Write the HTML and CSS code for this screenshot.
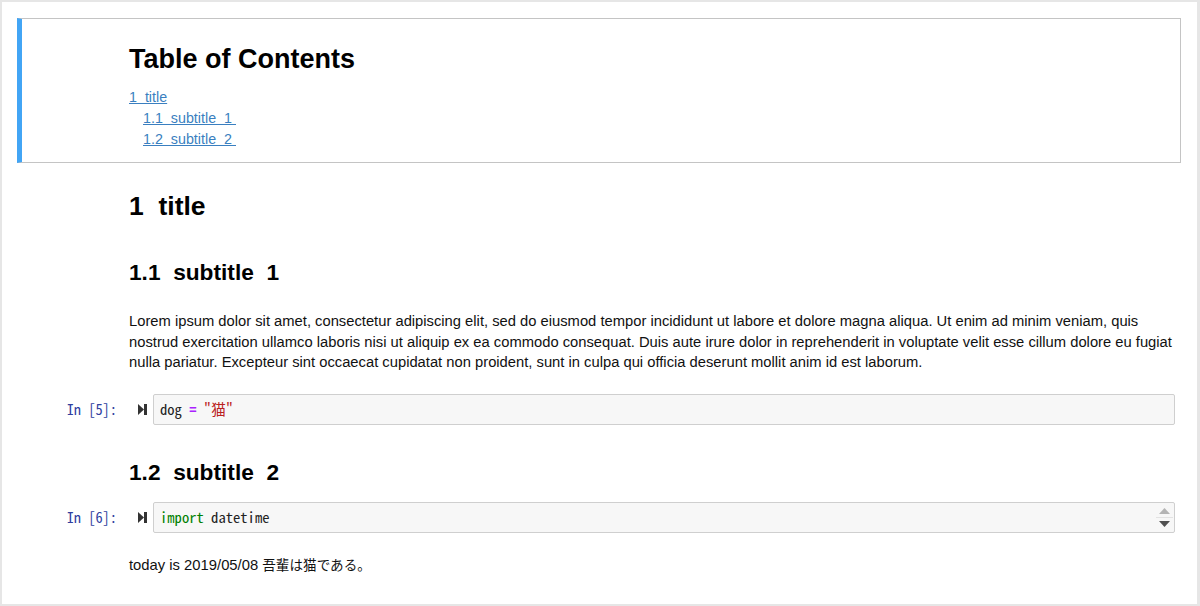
FILE: index.html
```html
<!DOCTYPE html>
<html lang="ja">
<head>
<meta charset="utf-8">
<title>Notebook</title>
<link rel="stylesheet" href="styles.css">
</head>
<body>
<div class="page">
  <div class="notebook">
    <div class="toc-cell">
      <div class="toc-title">Table of Contents</div>
      <ul class="toc-list">
        <li><a href="#t1">1&nbsp;&nbsp;title</a>
          <ul class="toc-sub">
            <li><a href="#t11">1.1&nbsp;&nbsp;subtitle&nbsp;&nbsp;1&nbsp;</a></li>
            <li><a href="#t12">1.2&nbsp;&nbsp;subtitle&nbsp;&nbsp;2&nbsp;</a></li>
          </ul>
        </li>
      </ul>
    </div>

    <div class="cell md h1-cell">
      <div class="prompt"></div>
      <div class="md-body"><h1 class="h1" id="t1">1&nbsp;&nbsp;title</h1></div>
    </div>

    <div class="cell md h2-cell first-h2">
      <div class="prompt"></div>
      <div class="md-body"><h2 class="h2" id="t11">1.1&nbsp;&nbsp;subtitle&nbsp;&nbsp;1</h2></div>
    </div>

    <div class="cell md para-cell">
      <div class="prompt"></div>
      <div class="md-body wide"><p class="para">Lorem ipsum dolor sit amet, consectetur adipiscing elit, sed do eiusmod tempor incididunt ut labore et dolore magna aliqua. Ut enim ad minim veniam, quis nostrud exercitation ullamco laboris nisi ut aliquip ex ea commodo consequat. Duis aute irure dolor in reprehenderit in voluptate velit esse cillum dolore eu fugiat nulla pariatur. Excepteur sint occaecat cupidatat non proident, sunt in culpa qui officia deserunt mollit anim id est laborum.</p></div>
    </div>

    <div class="cell code-cell cell-5">
      <div class="prompt in-prompt">In&nbsp;[5]:</div>
      <div class="run"><svg width="9" height="11" viewBox="0 0 9 11"><polygon points="0,0 6,5.5 0,11" fill="#333"/><rect x="6" y="0" width="3" height="11" fill="#333"/></svg></div>
      <div class="input">
        <div class="code">dog <span class="op">=</span> <span class="str">"猫"</span></div>
      </div>
    </div>

    <div class="cell md h2-cell second-h2">
      <div class="prompt"></div>
      <div class="md-body"><h2 class="h2" id="t12">1.2&nbsp;&nbsp;subtitle&nbsp;&nbsp;2</h2></div>
    </div>

    <div class="cell code-cell cell-6">
      <div class="prompt in-prompt">In&nbsp;[6]:</div>
      <div class="run"><svg width="9" height="11" viewBox="0 0 9 11"><polygon points="0,0 6,5.5 0,11" fill="#333"/><rect x="6" y="0" width="3" height="11" fill="#333"/></svg></div>
      <div class="input">
        <div class="code"><span class="kw">import</span> datetime</div>
        <div class="spinner">
          <div class="spin-btn"><svg width="11" height="6" viewBox="0 0 11 6"><polygon points="0,6 5.5,0 11,6" fill="#b4b4b4"/></svg></div>
          <div class="spin-btn spin-down"><svg width="11" height="6" viewBox="0 0 11 6"><polygon points="0,0 11,0 5.5,6" fill="#505050"/></svg></div>
        </div>
      </div>
    </div>

    <div class="cell output-cell">
      <div class="prompt"></div>
      <div class="output">today is 2019/05/08 <span class="ja">吾輩は猫である。</span></div>
    </div>
  </div>
</div>
</body>
</html>
```

FILE: styles.css
```css
html, body {
  margin: 0;
  padding: 0;
}
body {
  background: #e6e6e6;
  padding: 2px 3px 2px 2px;
  font-family: "Liberation Sans", Arial, "Noto Sans CJK JP", sans-serif;
  font-size: 14px;
  color: #000;
}
.page {
  background: #fff;
  height: 602px;
  box-sizing: border-box;
  padding: 16px 16px 0 15px;
  overflow: hidden;
}
.notebook {
  display: flex;
  flex-direction: column;
}

/* TOC */
.toc-cell {
  border: 1px solid #c4c4c4;
  border-left: 5px solid #42a5f5;
  padding: 26px 0 12px 107px;
}
.toc-title {
  font-size: 27px;
  font-weight: bold;
  line-height: 28px;
}
.toc-list, .toc-sub {
  list-style: none;
  margin: 0;
  padding: 0;
}
.toc-list {
  margin-top: 14px;
  line-height: 21px;
  font-size: 14.3px;
}
.toc-sub {
  padding-left: 14px;
}
.toc-list a {
  color: #3a7fc0;
  text-decoration: underline;
}

/* cells */
.cell {
  display: flex;
  align-items: flex-start;
}
.prompt {
  width: 112px;
  flex: none;
  box-sizing: border-box;
}
.md-body {
  flex: 1;
  margin-right: 6px;
  min-width: 0;
}
.md-body.wide {
  margin-right: 0;
}
.h1, .h2, .para {
  margin: 0;
  font-weight: bold;
}
.h1 {
  font-size: 26.5px;
  line-height: 28px;
}
.h2 {
  font-size: 22.7px;
  line-height: 24px;
}
.para {
  font-weight: normal;
  font-size: 14.75px;
  line-height: 20.5px;
  color: #111;
}
.h1-cell { margin-top: 29px; }
.first-h2 { margin-top: 40px; }
.para-cell { margin-top: 27px; }
.cell-5 { margin-top: 21.5px; }
.second-h2 { margin-top: 35px; }
.cell-6 { margin-top: 18px; }
.output-cell { margin-top: 21px; }

/* code cells */
.in-prompt {
  font-family: "Noto Sans Mono CJK JP", "Liberation Mono", monospace;
  font-size: 14.4px;
  color: #303f9f;
  text-align: right;
  padding-right: 12px;
  padding-top: 4px;
  line-height: 21px;
}
.run {
  width: 24px;
  flex: none;
  padding-top: 9.5px;
  padding-left: 9px;
  box-sizing: border-box;
  line-height: 0;
}
.input {
  flex: 1;
  margin-right: 6px;
  display: flex;
  background: #f7f7f7;
  border: 1px solid #cfcfcf;
  border-radius: 2px;
  min-width: 0;
}
.code {
  flex: 1;
  padding: 3px 6px 5px;
  font-family: "Noto Sans Mono CJK JP", "Liberation Mono", monospace;
  font-size: 14.6px;
  line-height: 21px;
  color: #222;
  white-space: pre;
}
.op { color: #aa22ff; font-weight: bold; }
.str { color: #ba2121; }
.kw { color: #008000; }

.spinner {
  width: 17px;
  flex: none;
  display: flex;
  flex-direction: column;
  padding: 2px 0;
  margin-right: 1px;
}
.spin-btn {
  flex: 1;
  display: flex;
  align-items: center;
  justify-content: center;
}
.spin-down {
  border-top: 1px solid #e2e2e2;
}

/* output */
.output {
  flex: 1;
  font-size: 14.8px;
  line-height: 20px;
  color: #111;
  font-family: "Liberation Sans", Arial, "Noto Sans CJK JP", sans-serif;
}
.ja {
  font-family: "Noto Sans CJK JP", sans-serif;
  font-size: 13.6px;
}
```
